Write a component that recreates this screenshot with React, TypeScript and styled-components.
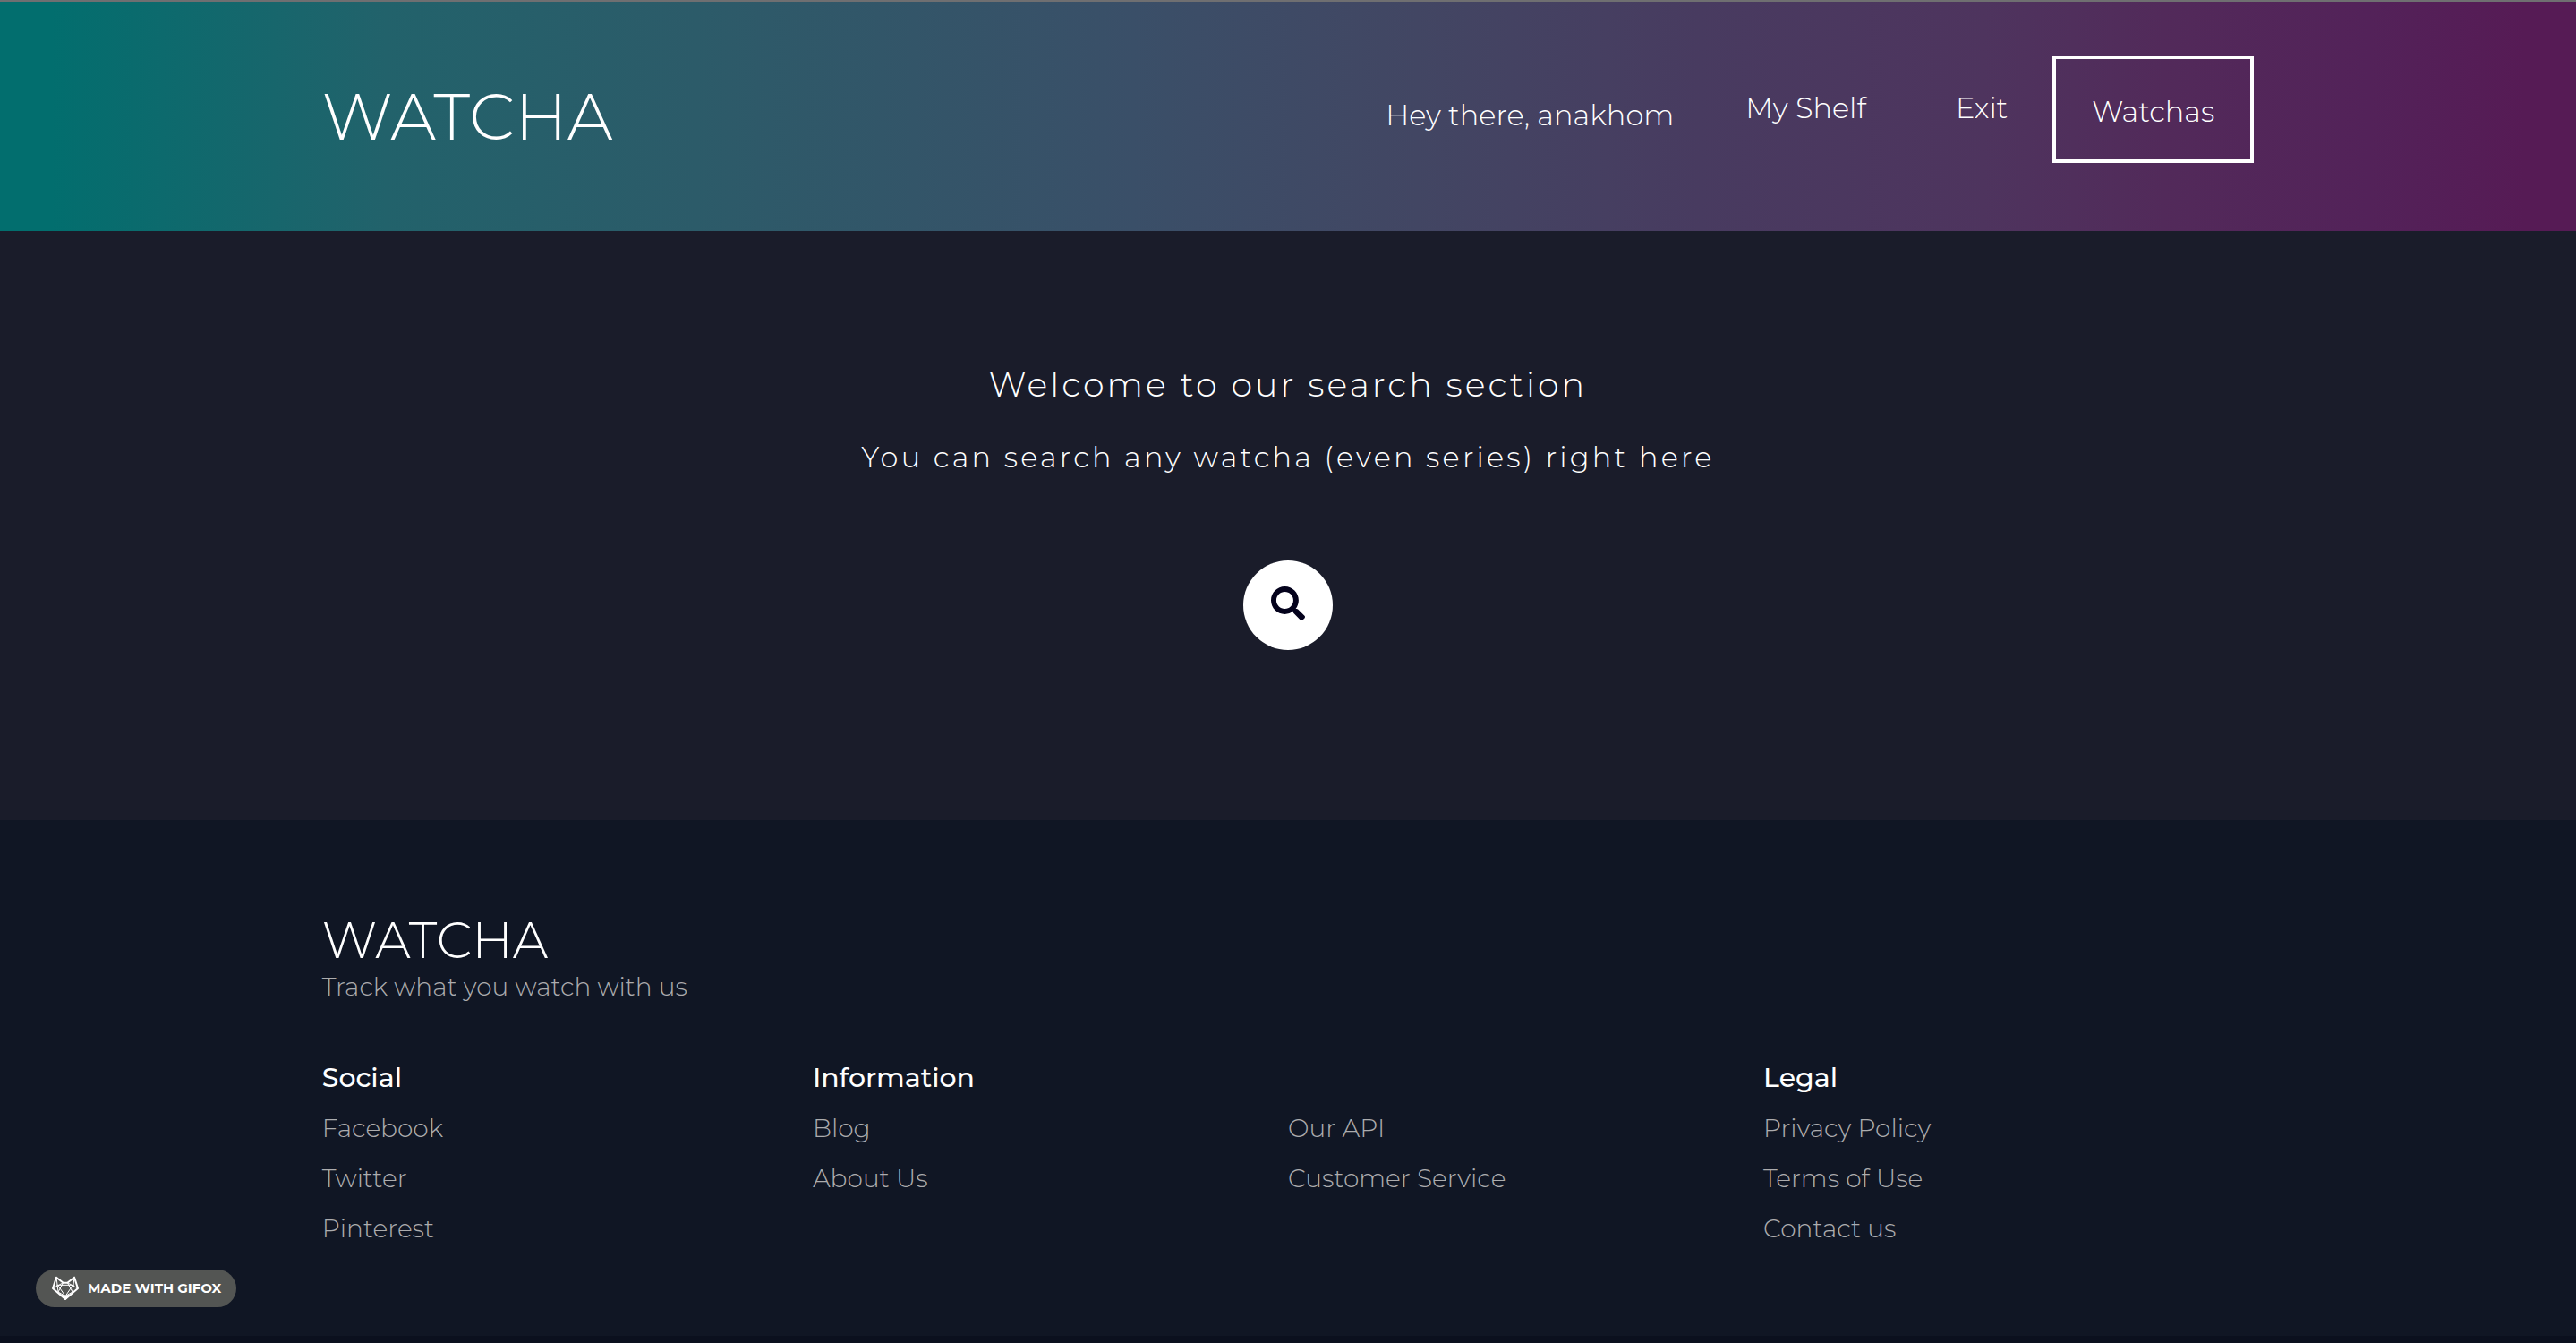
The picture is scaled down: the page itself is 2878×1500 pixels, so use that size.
import React from "react";
import styled, { createGlobalStyle } from "styled-components";
import { FaSearch } from "react-icons/fa";

const GlobalStyle = createGlobalStyle`
  *, *::before, *::after { box-sizing: border-box; }
  body {
    margin: 0;
    background: #101624;
    color: #fff;
    font-family: Montserrat, Inter, "Open Sans", sans-serif;
    font-weight: 300;
  }
  h1, h2, h3, p, ul { margin: 0; padding: 0; font-weight: inherit; }
  ul { list-style: none; }
  a { color: inherit; text-decoration: none; }
`;

const Page = styled.div`
  min-height: 100vh;
  display: flex;
  flex-direction: column;
`;

const Header = styled.header`
  display: flex;
  justify-content: space-between;
  align-items: flex-start;
  padding: 60px 12.5% 76px;
  border-top: 2px solid #6f6f71;
  background: linear-gradient(
    90deg,
    #026e6e 2%,
    #22626b 15%,
    #2c5b69 27%,
    #3a4f68 44%,
    #424663 55%,
    #483b60 66%,
    #4e345e 77%,
    #522a5a 84%,
    #532259 92%,
    #561b55 98%
  );
`;

const Logo = styled.a`
  padding-top: 20px;
  font-size: 72px;
  line-height: 96px;
`;

const Nav = styled.nav`
  display: flex;
  align-items: flex-start;
  font-size: 32px;
  line-height: 48px;
  white-space: nowrap;
`;

const Greeting = styled.span`
  padding: 43px 30px 0 0;
`;

const NavLink = styled.a`
  padding: 35px 50px 0;
`;

const BoxedLink = styled.a`
  padding: 35px 40px 29px;
  border: 4px solid #fff;
`;

const Hero = styled.main`
  display: flex;
  flex-direction: column;
  align-items: center;
  padding: 142px 24px 190px;
  background: #1a1c2a;
  text-align: center;
`;

const HeroTitle = styled.h1`
  font-size: 38px;
  line-height: 60px;
  letter-spacing: 0.08em;
`;

const HeroText = styled.p`
  margin: 26px 0 90px;
  font-size: 32px;
  line-height: 50px;
  letter-spacing: 0.1em;
`;

const SearchButton = styled.button`
  display: flex;
  align-items: center;
  justify-content: center;
  width: 100px;
  height: 100px;
  padding: 0 0 4px;
  border: 0;
  border-radius: 50%;
  background: #fff;
  color: #04021c;
  font-size: 38px;
  cursor: pointer;
`;

const Footer = styled.footer`
  flex: 1;
  padding: 100px 12.5% 84px;
  border-bottom: 8px solid #0b101e;
  background: #101624;
`;

const FooterLogo = styled.h2`
  font-size: 56px;
  line-height: 68px;
`;

const Tagline = styled.p`
  margin-bottom: 55px;
  color: #acacae;
  font-size: 28px;
  line-height: 36px;
`;

const Columns = styled.div`
  display: grid;
  grid-template-columns: 548fr 531fr 531fr 548fr;
`;

const ColumnTitle = styled.h3`
  font-size: 30px;
  font-weight: 500;
  line-height: 57px;
`;

const ColumnSpacer = styled.div`
  height: 57px;
`;

const FooterItem = styled.li`
  color: #acacae;
  font-size: 28px;
  line-height: 56px;
`;

const Badge = styled.a`
  position: fixed;
  left: 40px;
  bottom: 40px;
  display: flex;
  align-items: center;
  gap: 10px;
  height: 42px;
  padding: 0 17px 0 18px;
  border-radius: 21px;
  background: #535553;
  font-size: 15px;
  font-weight: 700;
  line-height: 20px;
  white-space: nowrap;
`;

const columns: { title?: string; links: string[] }[] = [
  { title: "Social", links: ["Facebook", "Twitter", "Pinterest"] },
  { title: "Information", links: ["Blog", "About Us"] },
  { links: ["Our API", "Customer Service"] },
  { title: "Legal", links: ["Privacy Policy", "Terms of Use", "Contact us"] },
];

function FoxIcon() {
  return (
    <svg width="30" height="28" viewBox="0 0 90 84" fill="none" stroke="#fff" strokeLinejoin="round" aria-hidden="true">
      <path d="M15 5 38 23H52L75 5 87 42 45 78 3 42Z" strokeWidth="6" />
      <path d="M3 42 38 23 21 54 15 5M87 42 52 23 69 54 75 5M16 31H74M21 33 45 68 69 33M21 54 45 68 69 54" strokeWidth="3" />
      <path d="M33 62 45 68 57 62 53 73 45 80 37 73Z" fill="#fff" strokeWidth="2" />
    </svg>
  );
}

export default function App() {
  return (
    <Page>
      <GlobalStyle />
      <Header>
        <Logo href="#">WATCHA</Logo>
        <Nav>
          <Greeting>Hey there, anakhom</Greeting>
          <NavLink href="#shelf">My Shelf</NavLink>
          <NavLink href="#exit">Exit</NavLink>
          <BoxedLink href="#watchas">Watchas</BoxedLink>
        </Nav>
      </Header>
      <Hero>
        <HeroTitle>Welcome to our search section</HeroTitle>
        <HeroText>You can search any watcha (even series) right here</HeroText>
        <SearchButton type="button" aria-label="Search">
          <FaSearch />
        </SearchButton>
      </Hero>
      <Footer>
        <FooterLogo>WATCHA</FooterLogo>
        <Tagline>Track what you watch with us</Tagline>
        <Columns>
          {columns.map(({ title, links }) => (
            <section key={links[0]}>
              {title ? <ColumnTitle>{title}</ColumnTitle> : <ColumnSpacer />}
              <ul>
                {links.map((link) => (
                  <FooterItem key={link}>
                    <a href="#">{link}</a>
                  </FooterItem>
                ))}
              </ul>
            </section>
          ))}
        </Columns>
      </Footer>
      <Badge href="#gifox">
        <FoxIcon />
        MADE WITH GIFOX
      </Badge>
    </Page>
  );
}
